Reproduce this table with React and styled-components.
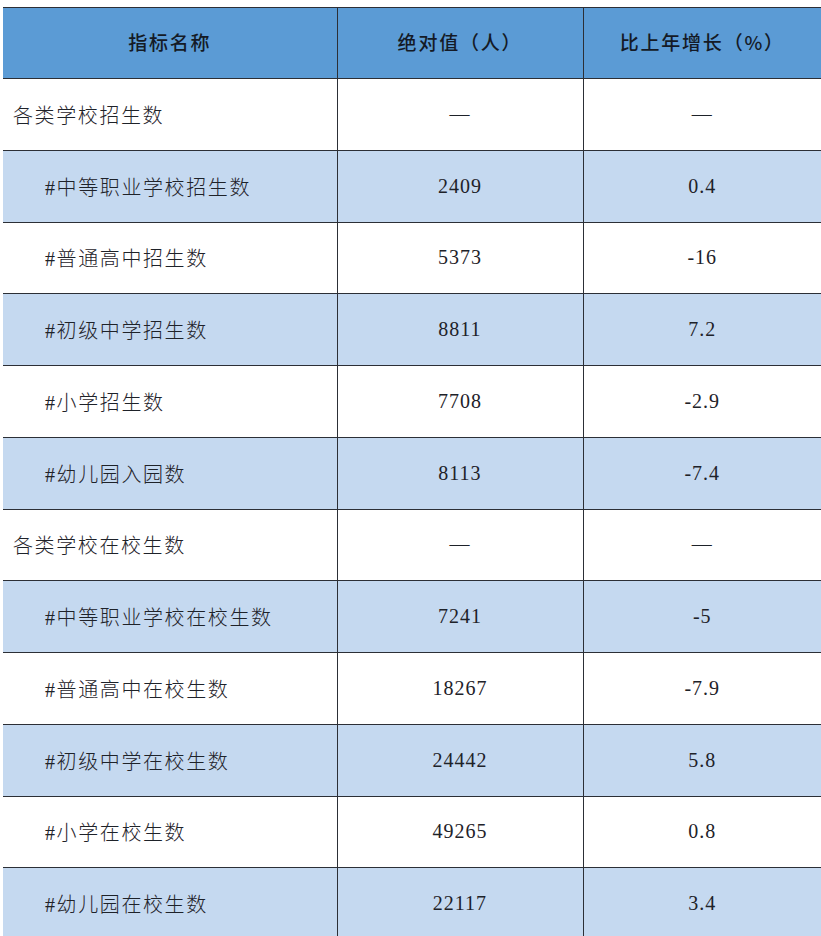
import React from "react";
import styled, { createGlobalStyle } from "styled-components";

const rows = [
  { name: "各类学校招生数", value: "—", growth: "—", level: 0 },
  { name: "#中等职业学校招生数", value: "2409", growth: "0.4", level: 1 },
  { name: "#普通高中招生数", value: "5373", growth: "-16", level: 1 },
  { name: "#初级中学招生数", value: "8811", growth: "7.2", level: 1 },
  { name: "#小学招生数", value: "7708", growth: "-2.9", level: 1 },
  { name: "#幼儿园入园数", value: "8113", growth: "-7.4", level: 1 },
  { name: "各类学校在校生数", value: "—", growth: "—", level: 0 },
  { name: "#中等职业学校在校生数", value: "7241", growth: "-5", level: 1 },
  { name: "#普通高中在校生数", value: "18267", growth: "-7.9", level: 1 },
  { name: "#初级中学在校生数", value: "24442", growth: "5.8", level: 1 },
  { name: "#小学在校生数", value: "49265", growth: "0.8", level: 1 },
  { name: "#幼儿园在校生数", value: "22117", growth: "3.4", level: 1 },
];

const App = () => {
  return (
    <>
      <GlobalStyle />
      <Page>
        <Table>
          <colgroup>
            <col style={{ width: 334 }} />
            <col style={{ width: 246 }} />
            <col style={{ width: 238 }} />
          </colgroup>
          <thead>
            <HeadRow>
              <HeadCell>指标名称</HeadCell>
              <HeadCell>绝对值（人）</HeadCell>
              <HeadCell>比上年增长（%）</HeadCell>
            </HeadRow>
          </thead>
          <tbody>
            {rows.map((row, i) => (
              <BodyRow key={row.name} $shaded={i % 2 === 1}>
                <NameCell $level={row.level}>{row.name}</NameCell>
                <NumCell>{row.value}</NumCell>
                <NumCell>{row.growth}</NumCell>
              </BodyRow>
            ))}
          </tbody>
        </Table>
      </Page>
    </>
  );
};

export default App;
// =======================================================================
//                              STYLE
// =======================================================================
const GlobalStyle = createGlobalStyle`
  html, body {
    margin: 0;
    padding: 0;
    background: #ffffff;
    overflow: hidden;
  }
`;

const Page = styled.div`
  width: 821px;
  height: 936px;
  padding: 7px 0 0 3px;
  box-sizing: border-box;
  overflow: hidden;
`;

const Table = styled.table`
  width: 818px;
  table-layout: fixed;
  border-collapse: collapse;
  border-top: 1px solid #2c2f36;
`;

const HeadRow = styled.tr`
  height: 71px;
  background: #5b9bd5;
`;

const HeadCell = styled.th`
  padding: 0 0 3px;
  text-align: center;
  vertical-align: middle;
  font-family: "Noto Sans CJK SC", "Noto Sans", sans-serif;
  font-weight: 500;
  font-size: 19px;
  letter-spacing: 1.8px;
  color: #141a26;
  border-bottom: 1px solid #2c2f36;
  & + & {
    border-left: 1px solid #2c2f36;
  }
`;

const BodyRow = styled.tr`
  height: 71.75px;
  background: ${(p) => (p.$shaded ? "#c5d9f0" : "#ffffff")};
`;

const cellBase = `
  padding: 0;
  vertical-align: middle;
  color: #1e2229;
  border-bottom: 1px solid #2c2f36;
`;

const NameCell = styled.td`
  ${cellBase}
  padding-left: ${(p) => (p.$level ? "42px" : "10px")};
  text-align: left;
  font-family: "Liberation Serif", "Noto Sans CJK SC", serif;
  font-weight: 300;
  font-size: 20px;
  letter-spacing: 1.6px;
`;

const NumCell = styled.td`
  ${cellBase}
  border-left: 1px solid #2c2f36;
  text-align: center;
  font-family: "Liberation Serif", "Noto Sans CJK SC", serif;
  font-size: 20px;
  letter-spacing: 1px;
`;
